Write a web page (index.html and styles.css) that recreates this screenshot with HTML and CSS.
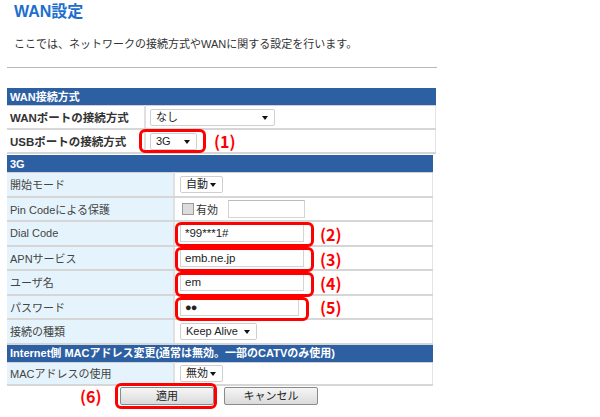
FILE: index.html
```html
<!DOCTYPE html>
<html lang="ja">
<head>
    <meta charset="UTF-8">
    <title>WAN設定</title>
    <link rel="stylesheet" href="styles.css">
</head>
<body>
<div class="page">
    <h1>WAN設定</h1>
    <p class="lead">ここでは、ネットワークの接続方式やWANに関する設定を行います。</p>
    <hr>

    <table class="conf conf-wan">
        <tr><th colspan="2">WAN接続方式</th></tr>
        <tr>
            <td class="key">WANポートの接続方式</td>
            <td><span class="sel w125">なし</span></td>
        </tr>
        <tr>
            <td class="key">USBポートの接続方式</td>
            <td><span class="sel w47">3G</span></td>
        </tr>
    </table>

    <table class="conf conf-3g">
        <tr><th colspan="2">3G</th></tr>
        <tr>
            <td class="key">開始モード</td>
            <td><span class="sel w43">自動</span></td>
        </tr>
        <tr>
            <td class="key">Pin Codeによる保護</td>
            <td><span class="chk"></span><span class="chk-label">有効</span><span class="txt w77"></span></td>
        </tr>
        <tr>
            <td class="key">Dial Code</td>
            <td><span class="txt w124">*99***1#</span></td>
        </tr>
        <tr>
            <td class="key">APNサービス</td>
            <td><span class="txt w124">emb.ne.jp</span></td>
        </tr>
        <tr>
            <td class="key">ユーザ名</td>
            <td><span class="txt w124">em</span></td>
        </tr>
        <tr>
            <td class="key">パスワード</td>
            <td><span class="txt w119 dots">●●</span></td>
        </tr>
        <tr>
            <td class="key">接続の種類</td>
            <td><span class="sel w77">Keep Alive</span></td>
        </tr>
        <tr><th colspan="2">Internet側 MACアドレス変更(通常は無効。一部のCATVのみ使用)</th></tr>
        <tr class="last">
            <td class="key">MACアドレスの使用</td>
            <td><span class="sel w43">無効</span></td>
        </tr>
    </table>

    <div class="buttons">
        <button type="button">適用</button>
        <button type="button">キャンセル</button>
    </div>

    <!-- 注記の赤枠 -->
    <div class="mark" style="left:139px;top:129px;width:67px;height:24px"></div>
    <div class="mark" style="left:175px;top:222px;width:139px;height:25px"></div>
    <div class="mark" style="left:175px;top:247px;width:139px;height:25px"></div>
    <div class="mark" style="left:175px;top:272px;width:139px;height:25px"></div>
    <div class="mark" style="left:175px;top:297px;width:134px;height:24px"></div>
    <div class="mark" style="left:115px;top:383px;width:102px;height:26px"></div>

    <span class="num" style="left:214px;top:132px">(1)</span>
    <span class="num" style="left:320px;top:225px">(2)</span>
    <span class="num" style="left:320px;top:250px">(3)</span>
    <span class="num" style="left:320px;top:274px">(4)</span>
    <span class="num" style="left:320px;top:298px">(5)</span>
    <span class="num" style="left:80px;top:387px">(6)</span>
</div>
</body>
</html>
```

FILE: styles.css
```css
body { margin: 0; font-family: "Liberation Sans", "Noto Sans CJK JP", sans-serif; font-size: 11px; color: #333; background: #fff; }
.page { position: relative; width: 600px; height: 417px; padding: 0 0 0 7px; box-sizing: border-box; }
h1 { margin: 0; padding: 3px 0 0 7px; height: 20px; font-size: 16px; font-weight: bold; color: #1c6fcc; line-height: 17px; }
.lead { margin: 14px 0 0 7px; font-size: 11px; line-height: 14px; color: #333; }
hr { margin: 16px 0 0; width: 430px; border: none; border-top: 1px solid #b8b8b8; }

.conf { border-collapse: collapse; background: #fff; }
.conf th { background: #2d5fa3; color: #fff; font-weight: bold; text-align: left; padding: 0 3px; height: 17px; line-height: 16px; border-bottom: 1px solid #d0d0d8; }
.conf td { padding: 0 0 0 3px; border-bottom: 2px solid #d6d6d6; border-right: 1px solid #e4e4e4; vertical-align: middle; }
.conf td.key { border-right: 2px solid #e0e0e0; }

.conf-wan { margin-top: 20px; width: 429px; }
.conf-wan td { height: 22px; }
.conf-wan td.key { width: 134px; font-weight: bold; font-size: 11.5px; color: #333; }
.conf-wan td:last-child { padding-left: 4px; }

.conf-3g { margin-top: 1px; width: 426px; }
.conf-3g td { height: 22.5px; }
.conf-3g .last td { height: 21.5px; }
.conf-3g td.key { width: 163px; background: #e5f4fc; color: #444; }
.conf-3g td:last-child { padding-left: 5px; }

.sel { display: inline-block; position: relative; box-sizing: border-box; height: 17px; line-height: 15px; padding: 0 0 0 5px; border: 1px solid #cfcfcf; border-radius: 2px; background: #fff; color: #222; font-size: 11px; vertical-align: middle; }
.sel::after { content: ""; position: absolute; right: 6px; top: 6px; border-left: 3.5px solid transparent; border-right: 3.5px solid transparent; border-top: 4px solid #111; }
.txt { display: inline-block; box-sizing: border-box; height: 18px; line-height: 16px; padding: 0 4px; border: 1px solid #d4d4d4; border-top-color: #bbb; background: #fff; color: #222; font-size: 11.5px; vertical-align: middle; }
.dots { font-size: 11px; letter-spacing: -1px; }
.chk { display: inline-block; width: 10px; height: 10px; margin: 0 2px 0 2px; border: 1px solid #9a9a9a; background: #dcdcdc; vertical-align: middle; }
.chk-label { display: inline-block; width: 32px; vertical-align: middle; color: #333; }

.w43 { width: 43px; } .w47 { width: 47px; } .w77 { width: 77px; }
.w119 { width: 119px; } .w124 { width: 124px; } .w125 { width: 125px; }

.buttons { display: flex; gap: 10px; margin: 1px 0 0 113px; }
.buttons button { width: 94px; height: 18px; padding: 0; border: 1px solid #8a8a8a; border-radius: 2px; background: linear-gradient(#f6f6f6, #dadada); font-family: inherit; font-size: 11px; color: #222; line-height: 16px; }

.mark { position: absolute; box-sizing: border-box; border: 3px solid #f00; border-radius: 6px; }
.num { position: absolute; color: #f00; font-weight: bold; font-size: 16px; line-height: 18px; font-family: "Noto Sans CJK JP", sans-serif; }
```
